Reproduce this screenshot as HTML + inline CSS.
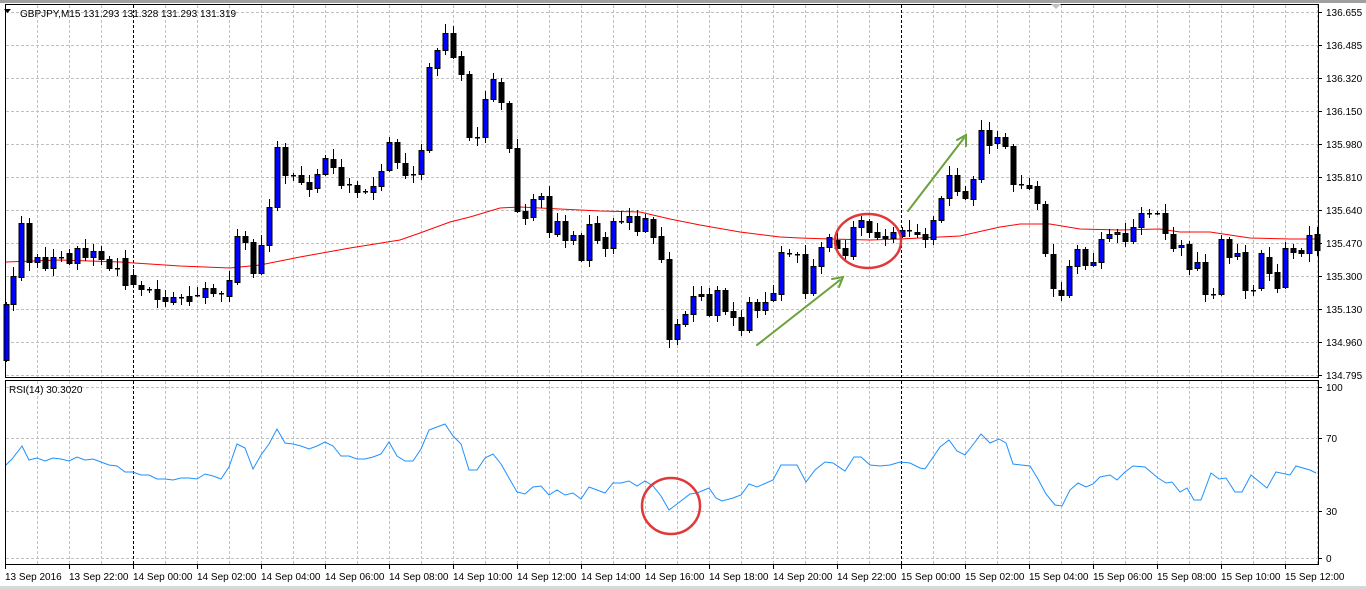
<!DOCTYPE html>
<html><head><meta charset="utf-8"><style>
html,body{margin:0;padding:0;background:#fff;width:1366px;height:589px;overflow:hidden}
svg{display:block}
text{font-family:"Liberation Sans",sans-serif;font-size:10px;fill:#000}
</style></head><body>
<svg id="s" width="1366" height="589" xmlns="http://www.w3.org/2000/svg">
<rect x="0" y="0" width="1366" height="3" fill="#a0a0a0"/>
<rect x="0" y="586" width="1366" height="3" fill="#d8d8d8"/>
<g id="grid" stroke="#c0c0c0" stroke-dasharray="3,2" stroke-width="1"></g>
<g id="ma"></g>
<g id="cand"></g>
<g id="rsi"></g>
<rect x="5.5" y="4.5" width="1313" height="373" fill="none" stroke="#000"/>
<rect x="5.5" y="380.5" width="1313" height="184" fill="none" stroke="#000"/>
<path d="M4 9 L11 9 L7.5 13 Z" fill="#000"/>
<text x="20" y="17">GBPJPY,M15  131.293 131.328 131.293 131.319</text>
<path d="M1051 4 L1061 4 L1056 9 Z" fill="#c0c0c0"/>
<text x="9" y="393">RSI(14) 30.3020</text>
<g id="ax"></g>
<g fill="none" stroke-linecap="round">
<line x1="757" y1="345" x2="840" y2="280" stroke="#6aa23a" stroke-width="2"/>
<path d="M832 279 L843 277 L839 287" stroke="#6aa23a" stroke-width="2"/>
<line x1="908" y1="211" x2="964" y2="138" stroke="#6aa23a" stroke-width="2"/>
<path d="M957 140 L966 135 L966 146" stroke="#6aa23a" stroke-width="2"/>
<ellipse cx="868" cy="241" rx="33" ry="27" stroke="#e0393a" stroke-width="2.5"/>
<ellipse cx="671" cy="506" rx="29" ry="28" stroke="#e0393a" stroke-width="2.5"/>
</g>
</svg>
<script>
var NS="http://www.w3.org/2000/svg";
function el(p,t,a){var e=document.createElementNS(NS,t);for(var k in a)e.setAttribute(k,a[k]);document.getElementById(p).appendChild(e);return e;}
[12,45,78,111,144,177,210,243,276,309,342,375].forEach(function(y){el("grid","line",{x1:6,x2:1318,y1:y+.5,y2:y+.5});});
[387,438,511,558].forEach(function(y){el("grid","line",{x1:6,x2:1318,y1:y+.5,y2:y+.5});});
for(var x=37;x<1318;x+=32){
 var blk=(x==133||x==901);
 el("grid","line",{x1:x+.5,x2:x+.5,y1:5,y2:378,stroke:blk?"#000":"#c0c0c0"});
 el("grid","line",{x1:x+.5,x2:x+.5,y1:381,y2:564,stroke:blk?"#000":"#c0c0c0"});
}
var pl=["136.655","136.485","136.320","136.150","135.980","135.810","135.640","135.470","135.300","135.130","134.960","134.795"];
pl.forEach(function(t,i){var y=12+i*33;el("ax","line",{x1:1319,x2:1322,y1:y+.5,y2:y+.5,stroke:"#000"});var e=el("ax","text",{x:1326,y:y+4});e.textContent=t;});
[["100",387],["70",438],["30",511],["0",558]].forEach(function(a){el("ax","line",{x1:1319,x2:1322,y1:a[1]+.5,y2:a[1]+.5,stroke:"#000"});var e=el("ax","text",{x:1326,y:a[1]+4});e.textContent=a[0];});
var tl=["13 Sep 2016","13 Sep 22:00","14 Sep 00:00","14 Sep 02:00","14 Sep 04:00","14 Sep 06:00","14 Sep 08:00","14 Sep 10:00","14 Sep 12:00","14 Sep 14:00","14 Sep 16:00","14 Sep 18:00","14 Sep 20:00","14 Sep 22:00","15 Sep 00:00","15 Sep 02:00","15 Sep 04:00","15 Sep 06:00","15 Sep 08:00","15 Sep 10:00","15 Sep 12:00"];
tl.forEach(function(t,i){var x=i==0?5:5+i*64;el("ax","line",{x1:x+.5,x2:x+.5,y1:565,y2:569,stroke:"#000"});var e=el("ax","text",{x:x,y:580});e.textContent=t;});
var ma=[[6,262],[60,260],[120,262],[180,266],[230,268],[260,265],[300,257],[350,248],[400,240],[420,233],[450,222],[470,217],[500,208],[520,207],[560,209],[600,211],[640,212],[670,219],[700,225],[740,232],[780,237],[800,238],[830,239],[870,240],[900,239],[940,237],[960,236],[1000,227],[1020,224],[1050,224],[1080,229],[1120,230],[1160,229],[1180,232],[1210,232],[1250,238],[1290,239],[1317,239]];
el("ma","polyline",{points:ma.map(function(p){return p.join(",")}).join(" "),fill:"none",stroke:"#f00","stroke-width":1});
var c=[[6,360,304],[13,304,276],[21,277,223],[29,223,262],[37,262,257],[45,257,268],[53,268,257],[61,257,257],[69,253,263],[77,263,248],[85,248,257],[93,257,251],[101,251,259],[109,259,268],[117,268,268],[125,258,285],[133,275,284],[141,285,289],[149,289,289],[157,289,299],[165,297,301],[173,302,297],[181,297,297],[189,296,301],[197,295,295],[205,297,288],[213,288,293],[221,293,293],[229,296,280],[237,282,236],[245,236,242],[253,242,273],[261,273,245],[269,245,207],[277,207,147],[285,147,175],[293,175,175],[301,175,182],[309,182,189],[317,188,174],[325,174,158],[333,159,167],[341,167,185],[349,184,184],[357,185,192],[365,191,191],[373,192,186],[381,186,171],[389,170,142],[397,142,162],[405,163,175],[413,174,174],[421,174,150],[429,150,67],[437,68,50],[445,50,33],[453,33,57],[461,56,74],[469,74,137],[477,137,137],[485,137,99],[493,99,79],[501,82,102],[509,103,148],[517,148,211],[525,211,218],[533,217,199],[541,199,196],[549,196,232],[557,234,221],[565,221,240],[573,240,235],[581,235,260],[589,260,224],[597,223,240],[605,237,248],[613,248,221],[621,221,221],[629,222,216],[637,216,231],[645,231,218],[653,219,237],[661,236,259],[669,259,339],[677,339,324],[685,324,314],[693,314,296],[701,294,296],[709,294,315],[717,315,290],[725,290,311],[733,311,317],[741,317,330],[749,330,302],[757,302,310],[765,310,302],[773,300,293],[781,294,252],[789,253,253],[797,254,254],[805,254,293],[813,293,266],[821,266,247],[829,247,237],[837,240,248],[845,248,255],[853,256,227],[861,227,220],[869,221,232],[877,232,237],[885,236,238],[893,238,232],[902,236,230],[909,230,230],[917,232,234],[925,234,239],[933,239,220],[941,220,198],[949,198,175],[957,175,191],[965,191,198],[973,199,179],[981,179,130],[989,130,145],[997,143,137],[1005,137,146],[1013,146,184],[1021,184,184],[1029,185,188],[1037,186,203],[1045,204,253],[1053,254,288],[1061,290,295],[1069,295,266],[1077,266,249],[1085,249,265],[1093,265,262],[1101,262,239],[1109,238,234],[1117,234,232],[1125,233,241],[1133,241,227],[1141,227,213],[1149,213,213],[1157,213,213],[1165,213,233],[1173,234,248],[1181,247,245],[1189,244,269],[1197,268,262],[1205,262,294],[1213,294,294],[1221,294,239],[1229,239,257],[1237,256,253],[1245,252,290],[1253,290,290],[1261,288,253],[1269,257,273],[1277,272,288],[1285,287,248],[1293,248,252],[1301,250,253],[1309,253,235],[1317,234,250]];
c.forEach(function(d,i){
 var x=d[0],t=Math.min(d[1],d[2]),b=Math.max(d[1],d[2]);
 var w1=2+(i*7)%9,w2=2+(i*5)%8;
 el("cand","line",{x1:x+.5,x2:x+.5,y1:t-w1,y2:b+w2,stroke:"#000"});
 var bull=d[2]<d[1];
 if(b-t<2){el("cand","rect",{x:x-2,y:t,width:5,height:1.5,fill:"#000"});}
 else el("cand","rect",{x:x-2,y:t+.5,width:5,height:b-t,fill:bull?"#0000ff":"#000",stroke:"#000","stroke-width":1});
});
var r=[[6,465],[12,459],[22,446],[29,460],[37,458],[45,461],[53,458],[61,459],[69,461],[77,457],[85,460],[93,459],[101,462],[109,465],[117,466],[125,472],[133,472],[141,475],[149,475],[157,479],[165,479],[173,480],[181,478],[189,478],[197,479],[205,474],[213,476],[221,479],[229,467],[237,444],[245,448],[253,469],[261,455],[269,444],[277,429],[285,443],[293,444],[301,446],[309,449],[317,446],[325,442],[333,446],[341,456],[349,456],[357,459],[365,459],[373,457],[381,454],[389,442],[397,456],[405,461],[413,461],[421,449],[429,430],[437,427],[445,424],[453,436],[461,444],[469,470],[477,470],[485,458],[493,454],[501,464],[509,478],[517,492],[525,494],[533,487],[541,486],[549,495],[557,490],[565,495],[573,493],[581,499],[589,487],[597,490],[605,493],[613,483],[621,483],[629,481],[637,486],[645,481],[653,486],[661,496],[669,510],[677,504],[690,494],[697,493],[709,488],[716,498],[722,501],[733,498],[741,495],[749,484],[757,487],[773,480],[781,465],[797,465],[806,482],[815,470],[825,462],[833,463],[845,471],[854,457],[861,457],[870,465],[880,466],[890,465],[900,462],[910,463],[920,468],[925,469],[940,447],[949,440],[957,451],[965,455],[975,442],[981,434],[990,443],[999,439],[1006,443],[1013,464],[1030,466],[1038,479],[1046,494],[1055,505],[1062,506],[1070,490],[1078,483],[1086,487],[1093,484],[1100,477],[1110,475],[1117,480],[1125,472],[1133,466],[1145,467],[1158,478],[1166,483],[1172,482],[1180,492],[1187,488],[1194,500],[1201,500],[1211,473],[1219,479],[1226,478],[1235,492],[1242,492],[1251,475],[1267,488],[1276,472],[1290,475],[1296,466],[1310,470],[1316,473]];
el("rsi","polyline",{points:r.map(function(p){return p.join(",")}).join(" "),fill:"none",stroke:"#1e90ff","stroke-width":1});
</script>
</body></html>
